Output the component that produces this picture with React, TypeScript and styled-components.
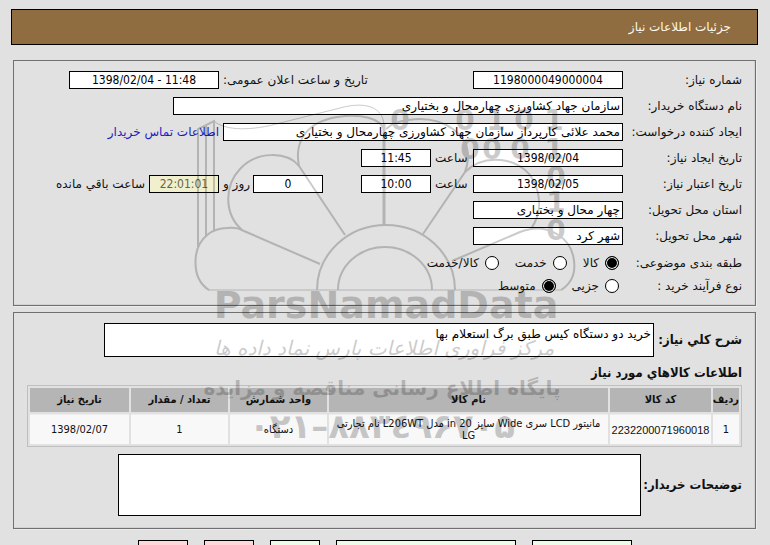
import React from "react";
import styled, { createGlobalStyle, css } from "styled-components";

const PERSIAN = '"DejaVu Sans", sans-serif';
const NUMERIC = '"DejaVu Sans Condensed", "DejaVu Sans", sans-serif';

const GlobalStyle = createGlobalStyle`
  * { box-sizing: border-box; }
  html, body { margin: 0; background: #e1e1e1; }
  body { font: 12px/16px ${PERSIAN}; color: #111; }
`;

const Page = styled.main`
  position: relative;
  height: 100vh;
  overflow: hidden;
  padding: 9px 12px 0 11px;
`;

const TitleBar = styled.header`
  display: flex;
  align-items: center;
  height: 36px;
  padding: 0 26px;
  border: 1px solid #000;
  background: #8f6d40;
`;

const Title = styled.h1`
  margin: 0;
  font-size: 12px;
  font-weight: normal;
  color: #fff8e8;
`;

const Panel = styled.section<{ $first?: boolean }>`
  margin: ${(p) => (p.$first ? "15px" : "6px")} 2px 0;
  padding: ${(p) => (p.$first ? "6px 13px 8px" : "10px 13px 12px")};
  border: 1px solid #707070;
  box-shadow: 1px 1px 0 #ececec, inset -1px -1px 0 #d2d2d2;
`;

const Row = styled.div`
  display: flex;
  align-items: center;
  height: 26px;
  white-space: nowrap;
`;

const Caption = styled.label`
  flex: 0 0 119px;
`;

const SideCaption = styled.label<{ $width: number; $gap?: number }>`
  flex: 0 0 ${(p) => p.$width}px;
  padding-left: ${(p) => p.$gap ?? 4}px;
  text-align: left;
`;

const Field = styled.input<{ $width: number; $numeric?: boolean; $timer?: boolean }>`
  flex: 0 1 ${(p) => p.$width}px;
  min-width: 0;
  width: ${(p) => p.$width}px;
  height: 18px;
  padding: 0 2px;
  border: 1px solid #000;
  border-radius: 0;
  background: #fff;
  font: 12px/16px ${PERSIAN};
  color: #000;
  outline: none;
  ${(p) => p.$numeric && css`
    direction: ltr;
    text-align: center;
    font-family: ${NUMERIC};
  `}
  ${(p) => p.$timer && css`
    background: #f0f0cf;
    color: #666648;
  `}
`;

const Spacer = styled.span`
  flex: 0 0 38px;
`;

const Trailing = styled.span`
  padding-right: 4px;
`;

const ContactLink = styled.a`
  padding-right: 4px;
  color: #1c1cc0;
  text-decoration: none;
`;

const ChoiceArea = styled.div`
  padding-top: 2px;
`;

const ChoiceRow = styled.fieldset`
  display: flex;
  align-items: center;
  height: 23px;
  margin: 0;
  padding: 0;
  border: 0;
  white-space: nowrap;
`;

const ChoiceCaption = styled.span`
  flex: 0 0 123px;
`;

const Choice = styled.label`
  display: flex;
  align-items: center;
  gap: 6px;
  margin-left: 16px;
`;

const Radio = styled.input`
  appearance: none;
  width: 14px;
  height: 14px;
  margin: 0;
  border: 1px solid #000;
  border-radius: 50%;
  background: #fff;
  &:checked {
    background: #000;
    box-shadow: inset 0 0 0 1px #fff;
  }
`;

const NoteRow = styled.div`
  display: flex;
  align-items: center;
`;

const NoteLabel = styled.label<{ $width: number }>`
  flex: 0 0 ${(p) => p.$width}px;
  font: bold 13px/16px ${NUMERIC};
  white-space: nowrap;
`;

const Note = styled.textarea<{ $width: number; $height: number }>`
  flex: 0 1 ${(p) => p.$width}px;
  min-width: 0;
  height: ${(p) => p.$height}px;
  padding: 2px;
  border: 1px solid #000;
  border-radius: 0;
  background: #fff;
  font: 12px/16px ${PERSIAN};
  color: #000;
  resize: none;
  outline: none;
`;

const Heading = styled.h2`
  margin: 0;
  padding-top: 8px;
  height: 28px;
  font: bold 13px/16px ${NUMERIC};
`;

const Goods = styled.table`
  width: 100%;
  margin-bottom: 7px;
  table-layout: fixed;
  border: 1px solid #bfbfbf;
  border-collapse: separate;
  border-spacing: 2px;
  font-size: 11px;
  line-height: 12px;
  text-align: center;
`;

const Col = styled.col<{ $width?: number }>`
  ${(p) => p.$width && css`width: ${p.$width}px;`}
`;

const HeadCell = styled.th`
  height: 24px;
  padding: 0;
  background: #b5b5b5;
  font: bold 11px/12px ${NUMERIC};
  white-space: nowrap;
`;

const Cell = styled.td<{ $face?: "digits" | "code" }>`
  height: 30px;
  padding: 0 1px;
  border-top: 1px solid #ededed;
  background: #f8f8f8;
  font-family: ${(p) => (p.$face === "code" ? '"Liberation Sans", sans-serif' : NUMERIC)};
`;

const Actions = styled.nav`
  display: flex;
  justify-content: center;
  gap: 16px;
  padding-top: 11px;
`;

const Action = styled.button<{ $width: number; $tone: "green" | "pink" }>`
  flex: 0 1 ${(p) => p.$width}px;
  height: 24px;
  border: 1px solid #000;
  border-radius: 0;
  background: ${(p) => (p.$tone === "green" ? "#edfbe9" : "#fdd9d9")};
`;

const Stamp = styled.svg`
  position: absolute;
  top: 95px;
  left: 50%;
  width: 400px;
  height: 360px;
  margin-left: -195px;
  opacity: 0.2;
  pointer-events: none;
`;

const PhoneText = styled.text`
  direction: ltr;
  unicode-bidi: bidi-override;
`;

const digits: [string, number, number][] = [
  ["0", 210, 35], ["0", 275, 35], ["1", 306, 35], ["0", 334, 35], ["1", 364, 35],
  ["0", 280, 64], ["0", 302, 64], ["0", 330, 64], ["1", 364, 64],
  ["0", 366, 92], ["1", 366, 117], ["0", 366, 145],
];

function Watermark() {
  return (
    <Stamp viewBox="0 0 400 360" aria-hidden="true">
      <g fill="none" stroke="#000" strokeWidth="2">
        <path d="M8 152V34L24 26V136M16 142V31" />
        <path d="M24 26C35 36 62 36 90 28L150 13C175 6 193 12 194 30" strokeWidth="1" />
        <path d="M194 28V130" strokeWidth="3" />
        <path d="M19 195C8 188 4 176 6 160C9 142 23 133 37 133C46 132 50 134 54 136L130 169" />
        <path d="M52 135C34 119 34 91 50 74C66 56 97 56 109 71L155 140" />
        <path d="M109 71C104 46 117 27 147 22C172 18 190 24 194 34" />
        <path d="M196 34C206 24 240 18 263 34C281 47 280 63 275 77L233 139" />
        <path d="M275 77C294 58 329 62 342 83C352 101 351 119 341 134" />
        <path d="M262 166L330 137C357 126 382 143 384 166C386 181 379 190 371 195" />
        <path d="M127 195A69 65 0 0 1 265 195M148 195A47 43 0 0 1 242 195" />
        <path d="M18 195H371" strokeWidth="1" />
      </g>
      <g fill="#000" textAnchor="middle" fontFamily="DejaVu Sans, sans-serif" fontWeight="bold">
        {digits.map(([d, x, y]) => (
          <text key={`${x}-${y}`} x={x} y={y} fontSize="28">{d}</text>
        ))}
        <text x="196" y="223" fontSize="38" direction="ltr">ParsNamadData</text>
        <text x="194" y="260" fontSize="20" fontWeight="normal" fontStyle="italic" direction="rtl">
          مرکز فرآوری اطلاعات پارس نماد داده ها
        </text>
        <text x="192" y="300" fontSize="20" direction="rtl">پایگاه اطلاع رسانی مناقصه و مزایده</text>
        <PhoneText x="192" y="343" fontSize="34">۰۲۱–۸۸۳٤۹۶۷۰۵</PhoneText>
      </g>
    </Stamp>
  );
}

function RadioGroup({ name, caption, options, value }: {
  name: string; caption: string; options: string[]; value: string;
}) {
  return (
    <ChoiceRow aria-label={caption}>
      <ChoiceCaption>{caption}</ChoiceCaption>
      {options.map((o) => (
        <Choice key={o}>
          <Radio type="radio" name={name} defaultChecked={o === value} />
          {o}
        </Choice>
      ))}
    </ChoiceRow>
  );
}

export default function App() {
  return (
    <Page dir="rtl" lang="fa">
      <GlobalStyle />
      <TitleBar><Title>جزئیات اطلاعات نیاز</Title></TitleBar>

      <Panel $first>
        <Row>
          <Caption htmlFor="number">شماره نیاز:</Caption>
          <Field id="number" $width={150} $numeric defaultValue="1198000049000004" />
          <SideCaption $width={254} htmlFor="announced">تاریخ و ساعت اعلان عمومی:</SideCaption>
          <Field id="announced" $width={150} $numeric defaultValue="1398/02/04 - 11:48" />
        </Row>
        <Row>
          <Caption htmlFor="buyer">نام دستگاه خریدار:</Caption>
          <Field id="buyer" $width={450} defaultValue="سازمان جهاد کشاورزی چهارمحال و بختیاری" />
        </Row>
        <Row>
          <Caption htmlFor="creator">ایجاد کننده درخواست:</Caption>
          <Field id="creator" $width={400} defaultValue="محمد علائی کارپرداز سازمان جهاد کشاورزی چهارمحال و بختیاری" />
          <ContactLink href="#contact">اطلاعات تماس خریدار</ContactLink>
        </Row>
        <Row>
          <Caption htmlFor="createdDate">تاریخ ایجاد نیاز:</Caption>
          <Field id="createdDate" $width={150} $numeric defaultValue="1398/02/04" />
          <SideCaption $width={42} htmlFor="createdTime">ساعت</SideCaption>
          <Field id="createdTime" $width={70} $numeric defaultValue="11:45" />
        </Row>
        <Row>
          <Caption htmlFor="validDate">تاریخ اعتبار نیاز:</Caption>
          <Field id="validDate" $width={150} $numeric defaultValue="1398/02/05" />
          <SideCaption $width={42} htmlFor="validTime">ساعت</SideCaption>
          <Field id="validTime" $width={70} $numeric defaultValue="10:00" />
          <Spacer />
          <Field id="days" $width={70} $numeric defaultValue="0" />
          <SideCaption $width={34} $gap={4} htmlFor="days">روز و</SideCaption>
          <Field id="timer" $width={70} $numeric $timer readOnly value="22:01:01" aria-label="ساعت باقي مانده" />
          <Trailing>ساعت باقي مانده</Trailing>
        </Row>
        <Row>
          <Caption htmlFor="province">استان محل تحویل:</Caption>
          <Field id="province" $width={150} defaultValue="چهار محال و بختیاری" />
        </Row>
        <Row>
          <Caption htmlFor="city">شهر محل تحویل:</Caption>
          <Field id="city" $width={150} defaultValue="شهر کرد" />
        </Row>
        <ChoiceArea>
          <RadioGroup name="category" caption="طبقه بندی موضوعی:" options={["کالا", "خدمت", "کالا/خدمت"]} value="کالا" />
          <RadioGroup name="process" caption="نوع فرآیند خرید :" options={["جزیی", "متوسط"]} value="متوسط" />
        </ChoiceArea>
      </Panel>

      <Panel>
        <NoteRow>
          <NoteLabel $width={88} htmlFor="summary">شرح کلي نياز:</NoteLabel>
          <Note id="summary" $width={550} $height={34} defaultValue="خرید دو دستگاه کیس طبق برگ استعلام بها" />
        </NoteRow>
        <Heading>اطلاعات کالاهاي مورد نياز</Heading>
        <Goods>
          <colgroup>
            <Col $width={26} /><Col $width={101} /><Col /><Col $width={97} /><Col $width={97} /><Col $width={99} />
          </colgroup>
          <thead>
            <tr>
              <HeadCell>ردیف</HeadCell>
              <HeadCell>کد کالا</HeadCell>
              <HeadCell>نام کالا</HeadCell>
              <HeadCell>واحد شمارش</HeadCell>
              <HeadCell>تعداد / مقدار</HeadCell>
              <HeadCell>تاریخ نیاز</HeadCell>
            </tr>
          </thead>
          <tbody>
            <tr>
              <Cell>1</Cell>
              <Cell $face="code">2232200071960018</Cell>
              <Cell>مانیتور LCD سری Wide سایز 20 in مدل L206WT نام تجارتی LG</Cell>
              <Cell>دستگاه</Cell>
              <Cell>1</Cell>
              <Cell>1398/02/07</Cell>
            </tr>
          </tbody>
        </Goods>
        <NoteRow>
          <NoteLabel $width={101} htmlFor="remarks">توضیحات خریدار:</NoteLabel>
          <Note id="remarks" $width={523} $height={62} />
        </NoteRow>
      </Panel>

      <Actions>
        <Action $width={100} $tone="green" />
        <Action $width={180} $tone="green" />
        <Action $width={50} $tone="green" />
        <Action $width={50} $tone="pink" />
        <Action $width={50} $tone="pink" />
      </Actions>

      <Watermark />
    </Page>
  );
}
